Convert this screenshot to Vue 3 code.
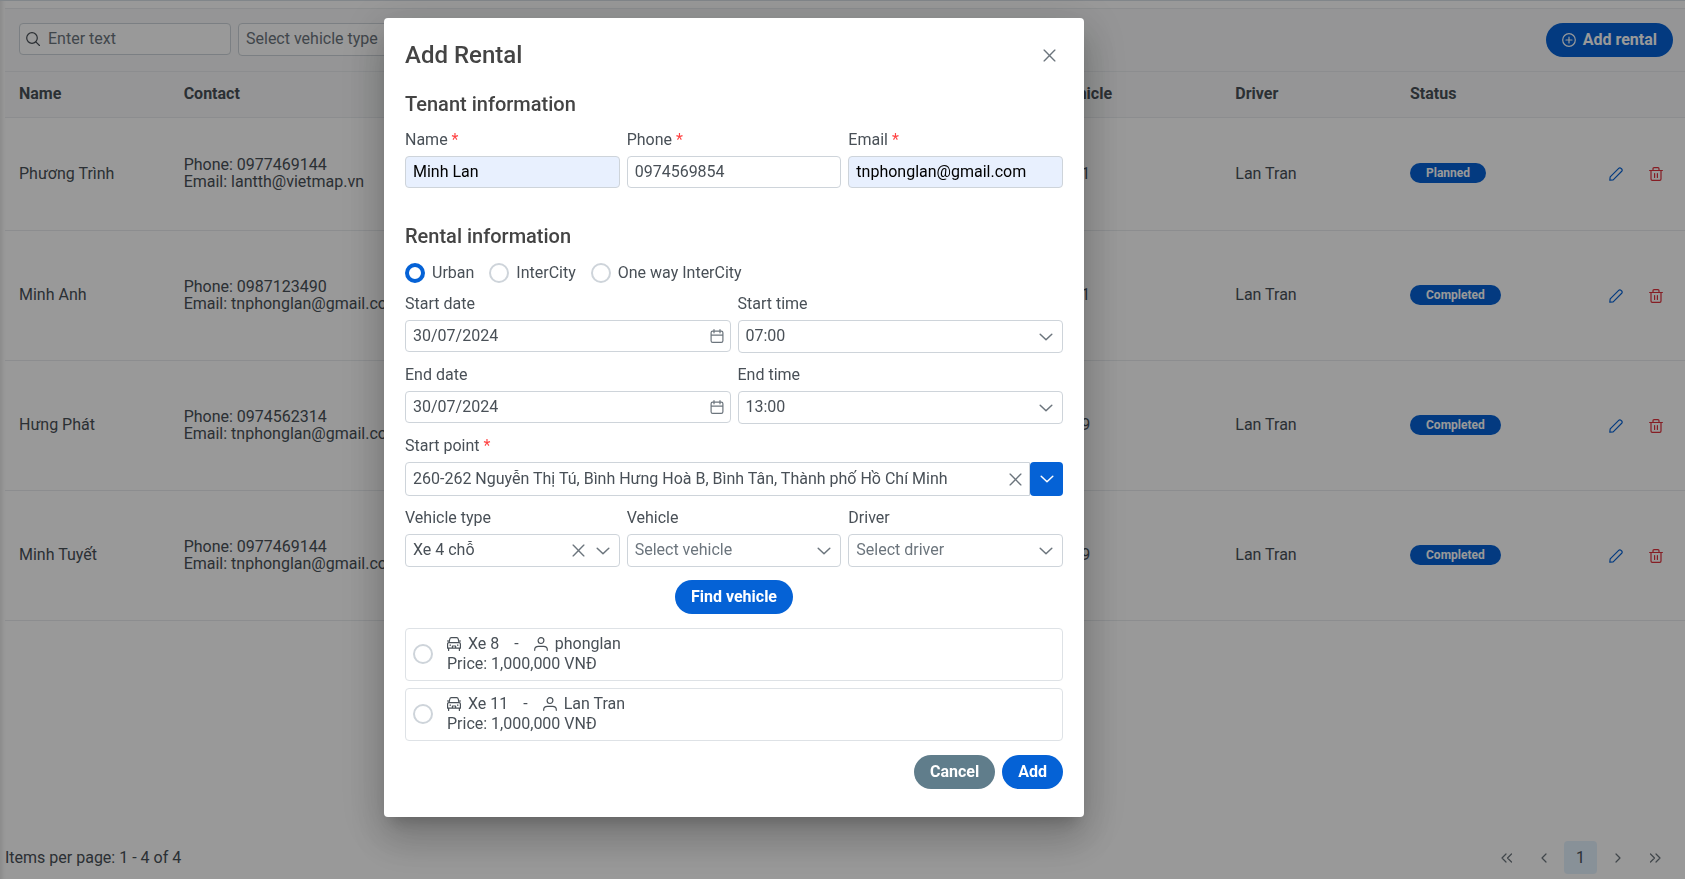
<script setup>
import { ref } from 'vue'

const rentals = [
  { name: 'Phương Trình', phone: '0977469144', email: 'lantth@vietmap.vn', vehicle: 'Xe 1', driver: 'Lan Tran', status: 'Planned' },
  { name: 'Minh Anh', phone: '0987123490', email: 'tnphonglan@gmail.com', vehicle: 'Xe 1', driver: 'Lan Tran', status: 'Completed' },
  { name: 'Hưng Phát', phone: '0974562314', email: 'tnphonglan@gmail.com', vehicle: 'Xe 9', driver: 'Lan Tran', status: 'Completed' },
  { name: 'Minh Tuyết', phone: '0977469144', email: 'tnphonglan@gmail.com', vehicle: 'Xe 9', driver: 'Lan Tran', status: 'Completed' },
]
const trips = ['Urban', 'InterCity', 'One way InterCity']
const offers = [
  { vehicle: 'Xe 8', driver: 'phonglan', price: '1,000,000 VNĐ' },
  { vehicle: 'Xe 11', driver: 'Lan Tran', price: '1,000,000 VNĐ' },
]

const trip = ref('Urban')
const offer = ref('')
const name = ref('Minh Lan')
const phone = ref('0974569854')
const email = ref('tnphonglan@gmail.com')
const startDate = ref('30/07/2024')
const endDate = ref('30/07/2024')
const startPoint = ref('260-262 Nguyễn Thị Tú, Bình Hưng Hoà B, Bình Tân, Thành phố Hồ Chí Minh')
</script>

<template>
  <div class="page">
    <main class="panel">
      <div class="toolbar">
        <div class="search">
          <svg class="icon" viewBox="0 0 14 14"><circle cx="6" cy="6" r="5.3" /><path d="M9.8 9.8 13.5 13.5" /></svg>
          <input type="text" class="control" placeholder="Enter text" aria-label="Search" />
        </div>
        <div class="picker filter">
          <select class="control empty" aria-label="Vehicle type filter"><option>Select vehicle type</option></select>
        </div>
        <button class="btn primary add-rental" type="button">
          <svg class="icon" viewBox="0 0 14 14"><circle cx="7" cy="7" r="6.3" /><path d="M7 4v6M4 7h6" /></svg>
          Add rental
        </button>
      </div>

      <table class="grid">
        <colgroup>
          <col class="c-name" /><col class="c-contact" /><col class="c-vehicle" /><col class="c-driver" /><col class="c-status" /><col />
        </colgroup>
        <thead>
          <tr><th>Name</th><th>Contact</th><th>Vehicle</th><th>Driver</th><th>Status</th><th></th></tr>
        </thead>
        <tbody>
          <tr v-for="r in rentals" :key="r.name">
            <td>{{ r.name }}</td>
            <td>Phone: {{ r.phone }}<br />Email: {{ r.email }}</td>
            <td>{{ r.vehicle }}</td>
            <td>{{ r.driver }}</td>
            <td class="status"><span class="badge">{{ r.status }}</span></td>
            <td class="tools">
              <div class="actions">
                <button class="plain edit" type="button" aria-label="Edit">
                  <svg class="icon" viewBox="0 0 14 14"><path d="M.8 13.2 1.2 9.8 9.7 1.3a1.6 1.6 0 0 1 2.3 0l.7.7a1.6 1.6 0 0 1 0 2.3L4.2 12.8z" /></svg>
                </button>
                <button class="plain remove" type="button" aria-label="Delete">
                  <svg class="icon" viewBox="0 0 14 14"><path d="M.6 3.5h12.8M2 3.5v8.6a1.3 1.3 0 0 0 1.3 1.3h7.4a1.3 1.3 0 0 0 1.3-1.3V3.5M4 3.5V1.7a1 1 0 0 1 1-1h4a1 1 0 0 1 1 1v1.8M5.6 6.5v4M8.4 6.5v4" /></svg>
                </button>
              </div>
            </td>
          </tr>
        </tbody>
      </table>
    </main>

    <footer class="pager">
      <span>Items per page: 1 - 4 of 4</span>
      <nav aria-label="Pages">
        <button class="plain" type="button" aria-label="First page"><svg class="icon" viewBox="0 0 14 14"><path d="M6 3 2 7l4 4M11.5 3l-4 4 4 4" /></svg></button>
        <button class="plain" type="button" aria-label="Previous page"><svg class="icon" viewBox="0 0 14 14"><path d="M9 3 5 7l4 4" /></svg></button>
        <button class="plain current" type="button">1</button>
        <button class="plain" type="button" aria-label="Next page"><svg class="icon" viewBox="0 0 14 14"><path d="m5 3 4 4-4 4" /></svg></button>
        <button class="plain" type="button" aria-label="Last page"><svg class="icon" viewBox="0 0 14 14"><path d="m2.5 3 4 4-4 4M8 3l4 4-4 4" /></svg></button>
      </nav>
    </footer>
  </div>

  <div class="mask">
    <form class="dialog" role="dialog" aria-labelledby="dialog-title" @submit.prevent>
      <header>
        <h1 id="dialog-title">Add Rental</h1>
        <button class="plain close" type="button" aria-label="Close"><svg class="icon cross" viewBox="0 0 14 14"><path d="m1.2 1.2 11.600 11.600m0-11.600-11.600 11.600" /></svg></button>
      </header>

      <h2>Tenant information</h2>
      <div class="row">
        <div class="field"><label for="name">Name <b>*</b></label><input id="name" v-model="name" type="text" class="control filled" /></div>
        <div class="field"><label for="phone">Phone <b>*</b></label><input id="phone" v-model="phone" type="text" class="control" /></div>
        <div class="field"><label for="email">Email <b>*</b></label><input id="email" v-model="email" type="text" class="control filled" /></div>
      </div>

      <h2 class="second">Rental information</h2>
      <div class="trips">
        <label v-for="t in trips" :key="t"><input v-model="trip" type="radio" name="trip" :value="t" />{{ t }}</label>
      </div>

      <div class="row">
        <div class="field">
          <label for="start-date">Start date</label>
          <div class="picker">
            <input id="start-date" v-model="startDate" type="text" class="control" />
            <svg class="icon calendar" viewBox="0 0 14 14"><path d="M2.700 2.200h8.600a1.600 1.600 0 0 1 1.600 1.600v8a1.600 1.600 0 0 1-1.600 1.600H2.700a1.600 1.600 0 0 1-1.600-1.600v-8a1.600 1.600 0 0 1 1.600-1.600zM1.100 6.200h11.800M4 .6v3.200M10 .6v3.200" /></svg>
          </div>
        </div>
        <div class="field">
          <label for="start-time">Start time</label>
          <div class="picker">
            <select id="start-time" class="control"><option>07:00</option></select>
            <svg class="icon arrow" viewBox="0 0 14 14"><path d="m1.200 4.200 5.800 5.600 5.800-5.600" /></svg>
          </div>
        </div>
      </div>

      <div class="row">
        <div class="field">
          <label for="end-date">End date</label>
          <div class="picker">
            <input id="end-date" v-model="endDate" type="text" class="control" />
            <svg class="icon calendar" viewBox="0 0 14 14"><path d="M2.700 2.200h8.600a1.600 1.600 0 0 1 1.600 1.600v8a1.600 1.600 0 0 1-1.600 1.600H2.700a1.600 1.600 0 0 1-1.600-1.600v-8a1.600 1.600 0 0 1 1.600-1.600zM1.100 6.200h11.800M4 .6v3.200M10 .6v3.200" /></svg>
          </div>
        </div>
        <div class="field">
          <label for="end-time">End time</label>
          <div class="picker">
            <select id="end-time" class="control"><option>13:00</option></select>
            <svg class="icon arrow" viewBox="0 0 14 14"><path d="m1.200 4.200 5.800 5.600 5.800-5.600" /></svg>
          </div>
        </div>
      </div>

      <div class="field">
        <label for="start-point">Start point <b>*</b></label>
        <div class="combo">
          <div class="picker">
            <input id="start-point" v-model="startPoint" type="text" class="control" />
            <button class="plain clear" type="button" aria-label="Clear start point"><svg class="icon cross" viewBox="0 0 14 14"><path d="m1.200 1.200 11.600 11.600m0-11.600-11.600 11.600" /></svg></button>
          </div>
          <button class="open" type="button" aria-label="Show places"><svg class="icon" viewBox="0 0 14 14"><path d="m1.200 4.200 5.800 5.600 5.800-5.600" /></svg></button>
        </div>
      </div>

      <div class="row">
        <div class="field">
          <label for="type">Vehicle type</label>
          <div class="picker">
            <select id="type" class="control"><option>Xe 4 chỗ</option></select>
            <button class="plain clear beside" type="button" aria-label="Clear vehicle type"><svg class="icon cross" viewBox="0 0 14 14"><path d="m1.200 1.200 11.600 11.600m0-11.600-11.600 11.600" /></svg></button>
            <svg class="icon arrow" viewBox="0 0 14 14"><path d="m1.200 4.200 5.800 5.600 5.800-5.600" /></svg>
          </div>
        </div>
        <div class="field">
          <label for="vehicle">Vehicle</label>
          <div class="picker">
            <select id="vehicle" class="control empty"><option>Select vehicle</option></select>
            <svg class="icon arrow" viewBox="0 0 14 14"><path d="m1.200 4.200 5.800 5.600 5.800-5.600" /></svg>
          </div>
        </div>
        <div class="field">
          <label for="driver">Driver</label>
          <div class="picker">
            <select id="driver" class="control empty"><option>Select driver</option></select>
            <svg class="icon arrow" viewBox="0 0 14 14"><path d="m1.200 4.200 5.800 5.600 5.800-5.600" /></svg>
          </div>
        </div>
      </div>

      <button class="btn primary find" type="button">Find vehicle</button>

      <div class="offers">
        <label v-for="o in offers" :key="o.vehicle" class="offer">
          <input v-model="offer" type="radio" name="offer" :value="o.vehicle" />
          <span>
            <span class="line">
              <svg class="icon" viewBox="0 0 14 14"><path d="M2 5.600 2.800 1.900A1.600 1.600 0 0 1 4.400.6h5.200a1.600 1.600 0 0 1 1.600 1.300L12 5.600M1.900 5.600h10.200a1.300 1.300 0 0 1 1.300 1.300v4.300H.6V6.900a1.300 1.300 0 0 1 1.300-1.300zM.4 4h1.400M12.200 4h1.400M1.600 11.200v2.200M12.400 11.200v2.200M5.400 11v-2h3.200v2M3.200 7.900v.6M10.800 7.900v.6" /></svg>
              <span>{{ o.vehicle }}</span>
              <span class="dash">-</span>
              <svg class="icon" viewBox="0 0 14 14"><circle cx="7" cy="3.600" r="2.900" /><path d="M.7 13.300v-.6c0-2 1.600-3.300 3.700-3.300h5.200c2.100 0 3.700 1.300 3.700 3.300v.6" /></svg>
              <span>{{ o.driver }}</span>
            </span>
            <span class="line">Price: {{ o.price }}</span>
          </span>
        </label>
      </div>

      <div class="buttons">
        <button class="btn muted" type="button">Cancel</button>
        <button class="btn primary" type="submit">Add</button>
      </div>
    </form>
  </div>
</template>

<style>
body {
  margin: 0;
  background: #fff;
}
</style>

<style scoped>
* {
  box-sizing: border-box;
}

.page,
.mask {
  font-family: Roboto, "Noto Sans", sans-serif;
  font-size: 16px;
  line-height: 20px;
  color: #495057;
}

input,
select,
button {
  font: inherit;
  color: inherit;
  margin: 0;
}

.icon {
  display: block;
  flex: none;
  width: 14px;
  height: 14px;
  fill: none;
  stroke: currentColor;
  stroke-width: 1.2;
  stroke-linecap: round;
  stroke-linejoin: round;
}

.cross {
  width: 13px;
  height: 13px;
}

.cross,
.arrow,
.open .icon {
  stroke-width: 1.5;
}

/* ---------- Rentals list ---------- */
.page {
  display: flex;
  flex-direction: column;
  justify-content: space-between;
  min-height: 100vh;
  padding: 7px 0 5px 5px;
  border-top: 1px solid #d8dfe6;
  box-shadow: inset 6px 0 4px -4px #e4e4e4;
}

.toolbar {
  display: flex;
  align-items: flex-start;
  gap: 7px;
  padding: 14px 12px 14px 14px;
  background: #f8f9fa;
  border: solid #e9ecef;
  border-width: 1px 0;
}

.search {
  position: relative;
  width: 212px;
}

.search .icon {
  position: absolute;
  left: 7px;
  top: 9px;
}

.search .control {
  padding-left: 28px;
}

.filter {
  width: 212px;
}

.add-rental {
  margin-left: auto;
}

.grid {
  width: 100%;
  table-layout: fixed;
  border-collapse: separate;
  border-spacing: 0;
  line-height: 17px;
}

.c-name { width: 9.8%; }
.c-contact { width: 52.1%; }
.c-vehicle { width: 10.5%; }
.c-driver { width: 10.4%; }
.c-status { width: 11.2%; }

.grid th,
.grid td {
  padding: 0 14px 2px;
  text-align: left;
  border-bottom: 1px solid #e9ecef;
}

.grid th {
  height: 46px;
  background: #f8f9fa;
  font-weight: 700;
}

.grid td {
  height: 130px;
}

.grid tr:first-child td {
  height: 113px;
}

.badge {
  display: inline-block;
  vertical-align: middle;
  padding: 0 16px;
  border-radius: 10px;
  background: #0562d6;
  color: #fff;
  font-size: 12px;
  font-weight: 700;
  line-height: 20px;
}

.grid .tools {
  padding: 0 22px 0 0;
}

.actions {
  display: flex;
  justify-content: flex-end;
  gap: 26px;
}

.plain {
  display: flex;
  align-items: center;
  justify-content: center;
  padding: 0;
  border: 0;
  background: none;
}

.edit { color: #0562d6; }
.remove { color: #e0313c; }

.pager,
.pager nav {
  display: flex;
  align-items: center;
}

.pager {
  justify-content: space-between;
  padding-right: 14px;
}

.pager nav {
  gap: 4px;
}

.pager .plain {
  width: 33px;
  height: 33px;
  border-radius: 4px;
  color: #6c757d;
}

.pager .current {
  background: #e3f2fd;
  color: #495057;
}

/* ---------- Form controls ---------- */
.control {
  display: block;
  width: 100%;
  height: 32px;
  padding: 0 7px 1px;
  border: 1px solid #ced4da;
  border-radius: 4px;
  background: #fff;
  color: #495057;
  appearance: none;
  outline: none;
}

.control::placeholder {
  color: #6c757d;
  opacity: 1;
}

select.control {
  height: 33px;
  padding-bottom: 2px;
}

.control.empty {
  color: #6c757d;
}

.control.filled {
  background: #e8f0fe;
  color: #000;
}

.picker {
  position: relative;
}

.picker .icon {
  color: #6c757d;
}

.arrow,
.calendar {
  position: absolute;
  top: 10px;
  right: 10px;
}

.calendar {
  top: 9px;
  right: 7px;
}

.clear {
  position: absolute;
  top: 0;
  bottom: 0;
  right: 8px;
}

.clear.beside {
  right: 35px;
}

.btn {
  display: flex;
  align-items: center;
  gap: 7px;
  height: 34px;
  padding: 0 16px;
  border: 0;
  border-radius: 17px;
  color: #fff;
  font-weight: 700;
}

.primary { background: #0562d6; }
.muted { background: #607d8b; }

input[type="radio"] {
  appearance: none;
  flex: none;
  width: 20px;
  height: 20px;
  border: 2px solid #ced4da;
  border-radius: 50%;
  background: #fff;
}

input[type="radio"]:checked {
  border: 4px solid #0562d6;
}

/* ---------- Dialog ---------- */
.mask {
  position: fixed;
  inset: 0;
  display: flex;
  justify-content: center;
  align-items: flex-start;
  padding: 18px 235px 18px 18px;
  overflow: auto;
  background: rgba(0, 0, 0, 0.4);
}

.dialog {
  width: 100%;
  max-width: 700px;
  padding: 21px 21px 28px;
  border-radius: 4px;
  background: #fff;
  box-shadow: 0 11px 15px -7px rgba(0, 0, 0, 0.2), 0 24px 38px 3px rgba(0, 0, 0, 0.14), 0 9px 46px 8px rgba(0, 0, 0, 0.12);
}

.dialog header {
  display: flex;
  align-items: center;
  justify-content: space-between;
}

h1,
h2 {
  margin: 0;
  color: #444;
  font-weight: 500;
}

h1 {
  font-size: 24px;
  line-height: 32px;
}

h2 {
  margin: 21px 0 14px;
  font-size: 20px;
  line-height: 24px;
}

h2.second {
  margin: 24px 0 15px;
}

.close {
  width: 28px;
  height: 28px;
  color: #6c757d;
}

.row {
  display: flex;
  gap: 7px;
}

.field {
  flex: 1;
  min-width: 0;
  margin-bottom: 12px;
}

.field > label {
  display: block;
  margin-bottom: 6px;
}

.field b {
  color: #f44;
  font-weight: 400;
}

.trips {
  display: flex;
  gap: 15px;
  margin-bottom: 11px;
}

.trips label {
  display: flex;
  align-items: center;
  gap: 7px;
}

.combo {
  display: flex;
}

.combo .picker {
  flex: 1;
}

.combo .control {
  height: 34px;
  border-radius: 4px 0 0 4px;
  padding-right: 28px;
}

.open {
  display: flex;
  align-items: center;
  justify-content: center;
  width: 33px;
  padding: 0;
  border: 0;
  border-radius: 4px;
  background: #0562d6;
  color: #fff;
}

.find {
  margin: 1px auto 14px;
}

.offers {
  display: flex;
  flex-direction: column;
  gap: 7px;
}

.offer {
  display: flex;
  align-items: center;
  gap: 14px;
  padding: 5px 7px 6px;
  border: 1px solid #dee2e6;
  border-radius: 4px;
}

.line {
  display: flex;
  align-items: center;
  gap: 7px;
}

.dash {
  margin: 0 8px;
}

.buttons {
  display: flex;
  justify-content: flex-end;
  gap: 7px;
  margin-top: 14px;
}
</style>
